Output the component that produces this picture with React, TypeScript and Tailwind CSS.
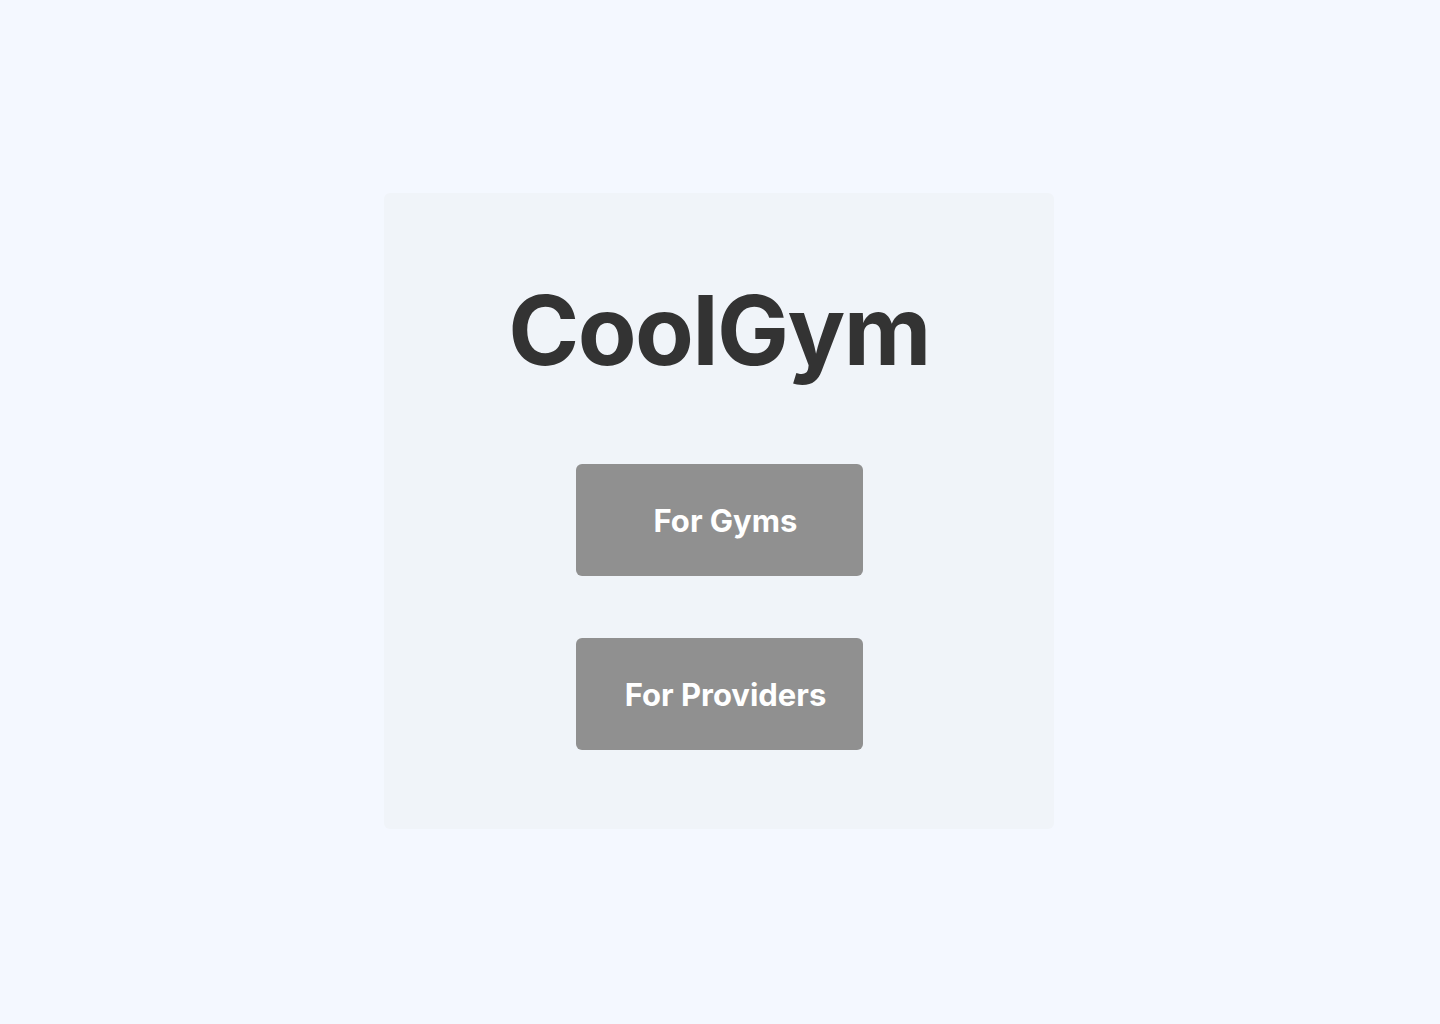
const buttons = ['For Gyms', 'For Providers'];

export default function App() {
  return (
    <div className="flex min-h-screen items-start justify-center bg-[#f4f8ff] pt-[193px] pr-[2px] font-['Inter',sans-serif]">
      <div className="flex h-[636px] w-[670px] flex-col items-center rounded-md bg-[#f0f4f9] pt-[89px]">
        <h1 className="text-8xl leading-none font-bold tracking-[-0.016em] text-[#333333]">CoolGym</h1>
        <div className="mt-[86px] flex flex-col gap-[62px]">
          {buttons.map((label) => (
            <button
              key={label}
              className="flex h-[112px] w-[287px] items-center justify-center rounded-md bg-[#909090] pt-[3px] pl-[13px] text-[31px] font-bold text-white"
            >
              {label}
            </button>
          ))}
        </div>
      </div>
    </div>
  );
}
